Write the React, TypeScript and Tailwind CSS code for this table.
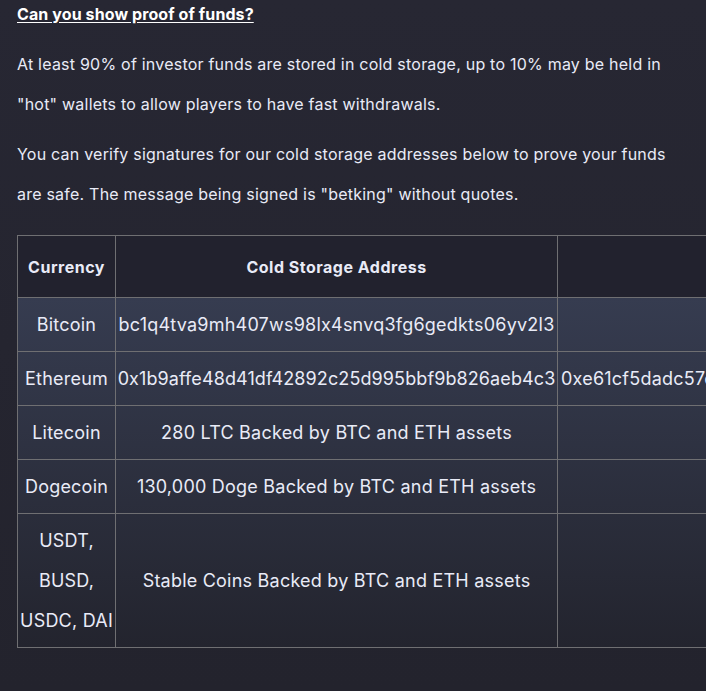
import React from "react";

const rows: { coin: React.ReactNode; addr: string; extra?: string; tall?: boolean; tight?: boolean }[] = [
  { coin: "Bitcoin", addr: "bc1q4tva9mh407ws98lx4snvq3fg6gedkts06yv2l3" },
  {
    coin: "Ethereum",
    addr: "0x1b9affe48d41df42892c25d995bbf9b826aeb4c3",
    extra: "0xe61cf5dadc57e6a4c5c5e6b6e14a3a6b1c2d4e",
    tight: true,
  },
  { coin: "Litecoin", addr: "280 LTC Backed by BTC and ETH assets" },
  { coin: "Dogecoin", addr: "130,000 Doge Backed by BTC and ETH assets" },
  { coin: "USDT, BUSD, USDC, DAI", addr: "Stable Coins Backed by BTC and ETH assets", tall: true },
];

export default function App() {
  return (
    <div
      className="min-h-[691px] w-[706px] overflow-hidden bg-[linear-gradient(180deg,#272733,#23232d)] text-[#e9ebf7]"
      style={{ fontFamily: "Inter, 'Open Sans', sans-serif" }}
    >
      <div className="pl-[17px] pr-[16px]">
        <h3 className="text-[16px] font-bold leading-[28px] tracking-[0.1px] underline underline-offset-2 text-white">
          Can you show proof of funds?
        </h3>
        {/* faq answer */}
        <p className="mt-[16px] text-[16px] leading-[40px] tracking-[0.22px]">
          At least 90% of investor funds are stored in cold storage, up to 10% may be held in "hot" wallets to allow
          players to have fast withdrawals.
        </p>
        <p className="mt-[10px] text-[16px] leading-[40px] tracking-[0.22px]">
          You can verify signatures for our cold storage addresses below to prove your funds are safe. The message being
          signed is "betking" without quotes.
        </p>

        <table className="mt-[21px] w-[900px] table-fixed border-collapse text-center">
          <colgroup>
            <col className="w-[98px]" />
            <col className="w-[442px]" />
            <col />
          </colgroup>
          <thead>
            <tr className="h-[62px] bg-[#22222e]">
              <th className="border border-[#6f6f72] text-[16px] font-bold tracking-[0.5px]">Currency</th>
              <th className="border border-[#6f6f72] text-[16px] font-bold tracking-[0.5px]">Cold Storage Address</th>
              <th className="border border-[#6f6f72]"></th>
            </tr>
          </thead>
          <tbody className="bg-[linear-gradient(180deg,#363c50,#23242e)] text-[18px] leading-[40px] tracking-[0.22px]">
            {rows.map((r, i) => (
              <tr key={i} className={r.tall ? "h-[134px]" : "h-[54px]"}>
                <td className="border border-[#6f6f72] px-0">{r.coin}</td>
                <td
                  className={
                    r.tight
                      ? "border border-[#6f6f72] whitespace-nowrap tracking-[0.1px]"
                      : "border border-[#6f6f72] whitespace-nowrap"
                  }
                >
                  {r.addr}
                </td>
                <td className="border border-[#6f6f72] whitespace-nowrap text-left pl-[3px]">{r.extra}</td>
              </tr>
            ))}
          </tbody>
        </table>
      </div>
    </div>
  );
}
